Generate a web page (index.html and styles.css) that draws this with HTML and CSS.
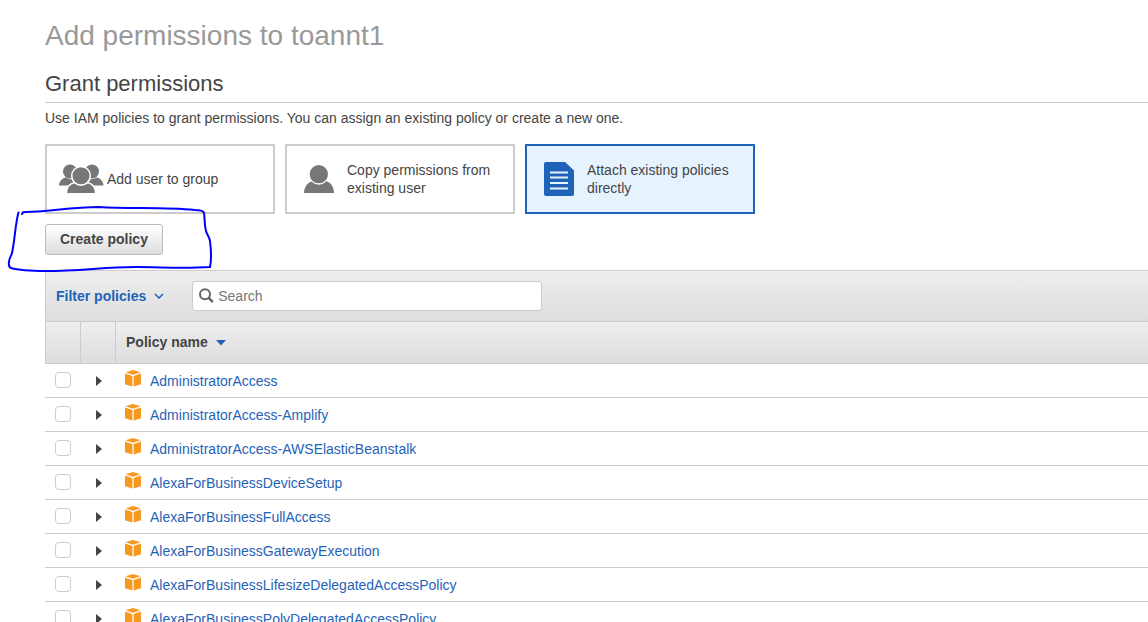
FILE: index.html
```html
<!DOCTYPE html>
<html lang="en">
<head>
<meta charset="utf-8">
<title>Add permissions to toannt1</title>
<link rel="stylesheet" href="styles.css">
</head>
<body>
<svg class="defs" aria-hidden="true">
  <symbol id="cube" viewBox="0 0 16 17">
    <path d="M8 0 15.500 2.300 8 4.800.5 2.300Z"/>
    <path d="M0 3.400 7.400 5.900V16.500L0 14.200Z"/>
    <path d="M16 3.400 8.600 5.900V16.500L16 14.200Z"/>
  </symbol>
</svg>
<main class="page">
  <h1 class="title">Add permissions to toannt1</h1>
  <h2 class="subtitle">Grant permissions</h2>
  <p class="intro">Use IAM policies to grant permissions. You can assign an existing policy or create a new one.</p>

  <div class="options">
    <button type="button" class="option">
      <svg class="option-icon" width="46" height="30" viewBox="0 0 46 30" aria-hidden="true">
        <g fill="#777">
          <circle cx="11" cy="7.500" r="7"/><circle cx="33" cy="7.500" r="7"/>
          <path d="M0 21.500c.4-4.800 3.500-7.500 7-8 3 2 6 2 8 1L15 21.500ZM44.500 21.500c-.4-4.800-3.500-7.500-7-8-3 2-6 2-8 1L29.500 21.500Z"/>
        </g>
        <g fill="#777" stroke="#fff" stroke-width="1.500">
          <path d="M7.200 30c.3-6 3.300-10.500 8.300-11.500 4 3.200 9 3.200 13 0 5 1 8 5.500 8.300 11.500Z"/>
          <circle cx="22" cy="11.800" r="9.300"/>
        </g>
        <path fill="#fff" d="M6 29h32v1H6Z"/>
      </svg>
      <span>Add user to group</span>
    </button>
    <button type="button" class="option">
      <svg class="option-icon" width="46" height="30" viewBox="0 0 46 30" aria-hidden="true">
        <path fill="#777" d="M5 29c.3-6 3.500-10.500 8.500-12 4 3.500 9.500 3.500 13.500 0 5 1.500 7.700 6 8 12Z"/>
        <circle cx="19.800" cy="10.200" r="9.800" fill="#777" stroke="#fff" stroke-width="1.300"/>
      </svg>
      <span>Copy permissions from existing user</span>
    </button>
    <button type="button" class="option selected" aria-pressed="true">
      <svg class="option-icon" width="46" height="34" viewBox="0 0 46 34" aria-hidden="true">
        <path fill="#1f63b8" d="M7 0h19l9 8.500V32a2 2 0 0 1-2 2H7a2 2 0 0 1-2-2V2a2 2 0 0 1 2-2Z"/>
        <path stroke="#e6f3ff" stroke-width="2" d="M11 10.500h18M11 15.500h18M11 21h18M11 26.500h18"/>
      </svg>
      <span>Attach existing policies directly</span>
    </button>
  </div>

  <button type="button" class="create">Create policy</button>

  <section class="policies">
    <div class="toolbar">
      <button type="button" class="filter">Filter policies
        <svg width="10" height="6" viewBox="0 0 10 6" aria-hidden="true"><path d="M1 1 5 5 9 1" fill="none" stroke="#1f63b8" stroke-width="1.500"/></svg>
      </button>
      <label class="search">
        <svg width="15" height="17" viewBox="0 0 15 17" aria-hidden="true"><g fill="none" stroke="#666" stroke-width="2"><circle cx="6" cy="6.200" r="5"/><path stroke-width="2.500" d="M9.700 9.900 13.800 14"/></g></svg>
        <input type="text" placeholder="Search" aria-label="Search">
      </label>
    </div>
    <table class="table">
      <colgroup><col class="narrow"><col class="narrow"><col></colgroup>
      <thead>
        <tr><th></th><th></th><th>Policy name <svg class="sort" width="10" height="6" viewBox="0 0 10 6" aria-hidden="true"><path d="M0 0h10L5 5.500Z" fill="#1f63b8"/></svg></th></tr>
      </thead>
      <tbody id="rows"></tbody>
    </table>
  </section>

  <svg class="ink" width="230" height="80" viewBox="0 200 230 80" aria-hidden="true">
    <path d="M18.500 212.500C15 225 15 240 12 253c-1 4-3 5-3 9-.5 3 0 5 2 6 10 3 22 3 35 3 35 0 58-4 90-4 26 0 45 2 74 0 2-9 1-18 0-26-1-5-3-6-4-10-2-8-1-13-2-18-1-3-5-3-9-3-32-3-65-1-96-3-28 0-52 5-73 5-3 0-3 0-4 2"/>
  </svg>
</main>
<script src="rows.js"></script>
</body>
</html>
```

FILE: rows.js
```js
const policies = [
  "AdministratorAccess",
  "AdministratorAccess-Amplify",
  "AdministratorAccess-AWSElasticBeanstalk",
  "AlexaForBusinessDeviceSetup",
  "AlexaForBusinessFullAccess",
  "AlexaForBusinessGatewayExecution",
  "AlexaForBusinessLifesizeDelegatedAccessPolicy",
  "AlexaForBusinessPolyDelegatedAccessPolicy"
];

document.getElementById("rows").innerHTML = policies.map(name => `
  <tr>
    <td><input type="checkbox" class="check" aria-label="Select ${name}"></td>
    <td><button type="button" class="expand" aria-label="Expand ${name}"><svg width="6" height="10" viewBox="0 0 6 10"><path d="M0 0 6 5 0 10Z" fill="#444"/></svg></button></td>
    <td><div class="policy"><svg class="cube" width="16" height="17"><use href="#cube"/></svg><a href="#">${name}</a></div></td>
  </tr>`).join("");
```

FILE: styles.css
```css
* { box-sizing: border-box; }

body {
  margin: 0;
  height: 100vh;
  overflow: hidden;
  background: #fff;
  color: #444;
  font: 14px/18px "Liberation Sans", Arial, sans-serif;
}

button, input { font: inherit; color: inherit; }
button { cursor: pointer; }
svg { flex: none; }

.defs { position: absolute; width: 0; height: 0; }

.page { position: relative; padding: 19px 0 0 45px; }

.title {
  margin: 0 0 16px;
  color: #999;
  font-size: 28px;
  line-height: 34px;
  font-weight: normal;
}

.subtitle {
  margin: 0;
  padding-bottom: 3px;
  border-bottom: 1px solid #ccc;
  font-size: 22px;
  line-height: 30px;
  font-weight: normal;
}

.intro { margin: 6px 0 17px; }

.options { display: flex; gap: 10px; }

.option {
  display: flex;
  align-items: center;
  gap: 2px;
  width: 230px;
  height: 70px;
  padding: 0 12px;
  border: 2px solid #ccc;
  background: #fff;
  text-align: left;
}

.option.selected { border-color: #1f63b8; background: #e6f3ff; }

.create {
  display: block;
  margin: 10px 0 15px;
  padding: 6px 14px 7px;
  border: 1px solid #bbb;
  border-radius: 3px;
  background: linear-gradient(#fff, #ddd);
  font-weight: bold;
  line-height: 16px;
  height: 31px;
}

.policies { border-left: 1px solid #ccc; border-top: 1px solid #ccc; }

.toolbar {
  display: flex;
  align-items: center;
  gap: 28px;
  height: 50px;
  padding-left: 10px;
  background: linear-gradient(#eee, #ddd);
}

.filter {
  display: flex;
  align-items: center;
  gap: 8px;
  padding: 0;
  border: 0;
  background: none;
  color: #1f63b8;
  font-weight: bold;
}

.search {
  display: flex;
  align-items: center;
  gap: 4px;
  width: 350px;
  height: 30px;
  padding: 0 6px;
  border: 1px solid #ccc;
  border-radius: 3px;
  background: #fff;
}

.search input {
  flex: 1;
  min-width: 0;
  padding: 0;
  border: 0;
  outline: 0;
  background: none;
}

.search input::placeholder { color: #777; opacity: 1; }

.table {
  width: calc(100% + 1px);
  margin-left: -1px;
  border-spacing: 0;
  table-layout: fixed;
  background: #fff;
}

.narrow { width: 35px; }

th {
  height: 43px;
  padding: 0 10px 2px;
  border: solid #ccc;
  border-width: 1px 0 1px 1px;
  background: linear-gradient(#eee, #ddd);
  text-align: left;
}

.sort { margin-left: 4px; vertical-align: 1px; }

td {
  height: 34px;
  padding: 0 10px 2px;
  border-bottom: 1px solid #ccc;
}

.check {
  display: block;
  appearance: none;
  width: 16px;
  height: 16px;
  margin: 0;
  border: 1px solid #ccc;
  border-radius: 4px;
  background: #fff;
}

.expand {
  display: flex;
  width: 100%;
  padding: 2px 0 0 6px;
  border: 0;
  background: none;
}

.policy { display: flex; gap: 9px; }

.policy a { padding-top: 2px; color: #1f63b8; text-decoration: none; }

.cube { fill: #f7981f; }

.ink {
  position: absolute;
  left: 0;
  top: 200px;
  pointer-events: none;
  fill: none;
  stroke: #00f;
  stroke-width: 2;
  stroke-linecap: round;
}
```
